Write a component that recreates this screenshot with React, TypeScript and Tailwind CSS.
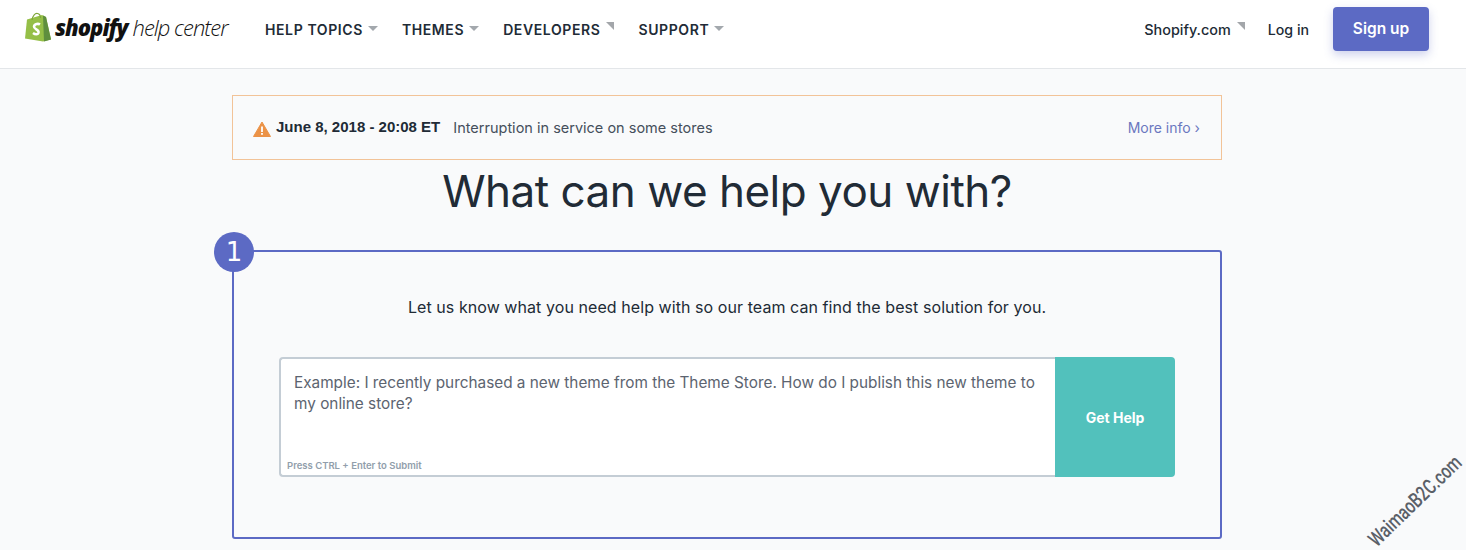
const inter = "font-['Inter','Liberation_Sans',sans-serif]";

function Caret({ corner }: { corner?: boolean }) {
  if (corner) {
    return (
      <svg width="8" height="8" viewBox="0 0 8 8" className="mb-[7px] ml-[6px]">
        <path d="M0 0H8V8Z" fill="#a3a6aa" />
      </svg>
    );
  }
  return (
    <svg width="10" height="5" viewBox="0 0 10 5" className="mb-[2px] ml-[5px]">
      <path d="M0 0H10L5 5Z" fill="#a3a8ad" />
    </svg>
  );
}

function NavItem({ label, corner }: { label: string; corner?: boolean }) {
  return (
    <a className="flex items-center text-[14px] font-semibold tracking-[0.6px] text-[#212b36]">
      {label}
      <Caret corner={corner} />
    </a>
  );
}

export default function App() {
  return (
    <div className={`${inter} relative h-[550px] w-[1466px] overflow-hidden bg-[#f9fafb]`}>
      <header className="flex h-[69px] items-center border-b border-[#e3e6e9] bg-white pl-[25px] pr-[37px]">
        <div className="mb-[14px] flex w-[240px] items-center">
          <svg width="26" height="30" viewBox="0 0 26 30">
            <path d="M2 7.5 17 3 21 5 26 27.5 18 29.5 0 26.5Z" fill="#95bf47" />
            <path d="M18 3.5 21 5 26 27.5 19 29.5Z" fill="#5e8e3e" />
            <path d="M7 8C7.5 4 10 1 12.5 1.5 15 2 15.5 4 15.5 6" fill="none" stroke="#7fa63a" strokeWidth="1.2" />
            <path d="M15 12.5C13.5 11.5 9.5 11.5 9 14.5 8.7 17.5 14 17.5 13.5 20.5 13 23 10 22.5 8 21" fill="none" stroke="#ffffff" strokeWidth="2.6" />
          </svg>
          <span className="ml-[4px] whitespace-nowrap font-['Open_Sans',sans-serif] text-[22px] leading-none italic tracking-[-1px] text-[#111]">
            <span className="font-extrabold">shopify</span>
            <span className="ml-[5px] font-light">help center</span>
          </span>
        </div>
        <nav className="mb-[9px] flex items-center gap-[24px]">
          <NavItem label="HELP TOPICS" />
          <NavItem label="THEMES" />
          <NavItem label="DEVELOPERS" corner />
          <NavItem label="SUPPORT" />
        </nav>
        <div className="ml-auto flex items-center">
          <a className="mb-[9px] flex items-center text-[14.4px] font-medium text-[#212b36]">
            Shopify.com
            <Caret corner />
          </a>
          <a className="mb-[9px] ml-[23px] text-[14.2px] font-medium text-[#212b36]">Log in</a>
          <a className="mb-[11px] ml-[24px] flex h-[44px] w-[96px] items-center justify-center rounded-[4px] bg-[#5c6ac4] text-[15.5px] font-semibold text-white shadow-[0_4px_10px_rgba(92,106,196,0.3)]">
            Sign up
          </a>
        </div>
      </header>

      <main className="flex flex-col items-center pr-[12px]">
        <div className="mt-[26px] flex h-[65px] w-[990px] items-center border border-[#f2c398] pl-[20px] pr-[21px] text-[14.5px]">
          <svg width="18" height="16" viewBox="0 0 18 16" className="mr-[5px] mt-[2px]">
            <path d="M9 1 17.5 15.5H.5Z" fill="#eb9247" stroke="#eb9247" strokeLinejoin="round" />
            <rect x="8.1" y="5.5" width="1.8" height="5.5" fill="#fff" />
            <rect x="8.1" y="12" width="1.8" height="1.8" fill="#fff" />
          </svg>
          <span className="font-['Liberation_Sans',sans-serif] text-[15px] font-bold text-[#212b36]">June 8, 2018 - 20:08 ET</span>
          <span className="ml-[13px] text-[#454f5b]">Interruption in service on some stores</span>
          <a className="ml-auto text-[14px] text-[#6b77bf]">More info ›</a>
        </div>

        <h1 className="mt-[1px] text-[44px] leading-[60px] font-normal tracking-[-0.5px] text-[#212b36]">What can we help you with?</h1>

        <section className="relative mt-[29px] flex h-[289px] w-[990px] flex-col items-center rounded-[3px] border-2 border-[#5c6ac4]">
          <div className="absolute left-[-20px] top-[-20px] flex h-[40px] w-[40px] items-center justify-center rounded-full bg-[#5c6ac4] font-['DejaVu_Sans',sans-serif] text-[26px] text-white">
            1
          </div>
          <p className="mt-[44px] text-[16px] leading-[22px] tracking-[0.07px] text-[#212b36]">
            Let us know what you need help with so our team can find the best solution for you.
          </p>
          <div className="mt-[39px] flex h-[120px] w-[896px]">
            <div className="relative flex-1 rounded-l-[4px] border-2 border-r-0 border-[#c4cdd5] bg-white pl-[13px] pr-[14px] pt-[13px] text-[15.33px] leading-[21px] text-[#5c6470]">
              Example: I recently purchased a new theme from the Theme Store. How do I publish this new theme to my online store?
              <span className="absolute bottom-[2px] left-[6px] text-[9.5px] leading-[14px] font-semibold text-[#919eab]">Press CTRL + Enter to Submit</span>
            </div>
            <button className="w-[120px] rounded-r-[4px] bg-[#52c1bc] text-[14px] font-bold text-white">Get Help</button>
          </div>
        </section>
      </main>

      <span className="absolute left-[1325px] top-[490px] w-[180px] text-center font-['Roboto',sans-serif] text-[21px] leading-[22px] font-medium whitespace-nowrap text-[#5a6068] [transform:rotate(-44deg)_scaleX(0.74)]">
        WaimaoB2C.com
      </span>
    </div>
  );
}
